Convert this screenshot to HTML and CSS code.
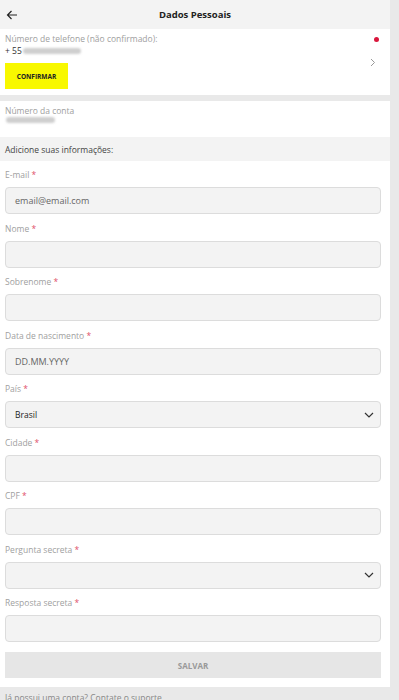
FILE: index.html
```html
<!DOCTYPE html>
<html lang="pt-BR">
<head>
    <meta charset="UTF-8">
    <meta name="viewport" content="width=device-width, initial-scale=1.0">
    <title>Dados Pessoais</title>
    <link rel="stylesheet" href="styles.css">
</head>
<body>
    <div class="page">
        <header class="topbar">
            <span class="back">
                <svg width="12" height="10" viewBox="0 0 12 10"><path d="M11 5H1.5M5.5 1 1.5 5l4 4" fill="none" stroke="#222" stroke-width="1.2"/></svg>
            </span>
            <h1>Dados Pessoais</h1>
        </header>

        <div class="card phone-card">
            <div class="phone-info">
                <p class="caption">Número de telefone (não confirmado):</p>
                <p class="value">+ 55<span class="blur blur-phone"></span></p>
                <button class="btn-confirm">CONFIRMAR</button>
            </div>
            <span class="dot"></span>
            <span class="chevron">
                <svg width="6" height="9" viewBox="0 0 6 9"><path d="M1 1l3.5 3.5L1 8" fill="none" stroke="#999" stroke-width="1"/></svg>
            </span>
        </div>

        <div class="card account-card">
            <p class="caption">Número da conta</p>
            <p class="value"><span class="blur blur-account"></span></p>
        </div>

        <div class="section-title">Adicione suas informações:</div>

        <form class="form">
            <div class="field">
                <label>E-mail <em>*</em></label>
                <div class="input">email@email.com</div>
            </div>
            <div class="field">
                <label>Nome <em>*</em></label>
                <div class="input"></div>
            </div>
            <div class="field">
                <label>Sobrenome <em>*</em></label>
                <div class="input"></div>
            </div>
            <div class="field">
                <label>Data de nascimento <em>*</em></label>
                <div class="input">DD.MM.YYYY</div>
            </div>
            <div class="field">
                <label>País <em>*</em></label>
                <div class="input select dark">Brasil
                    <svg width="10" height="6" viewBox="0 0 10 6"><path d="M1 1l4 4 4-4" fill="none" stroke="#333" stroke-width="1.2"/></svg>
                </div>
            </div>
            <div class="field">
                <label>Cidade <em>*</em></label>
                <div class="input"></div>
            </div>
            <div class="field">
                <label>CPF <em>*</em></label>
                <div class="input"></div>
            </div>
            <div class="field">
                <label>Pergunta secreta <em>*</em></label>
                <div class="input select">
                    <svg width="10" height="6" viewBox="0 0 10 6"><path d="M1 1l4 4 4-4" fill="none" stroke="#333" stroke-width="1.2"/></svg>
                </div>
            </div>
            <div class="field">
                <label>Resposta secreta <em>*</em></label>
                <div class="input"></div>
            </div>
            <div class="btn-save">SALVAR</div>
        </form>

        <p class="footer-note">Já possui uma conta? Contate o suporte</p>
    </div>
</body>
</html>
```

FILE: styles.css
```css
* {
    margin: 0;
    padding: 0;
    box-sizing: border-box;
}

body {
    font-family: 'Open Sans', 'Noto Sans', sans-serif;
    background: #e9e9e9;
    color: #333;
    font-size: 9px;
    overflow: hidden;
}

.page {
    width: 390px;
}

.topbar {
    height: 29px;
    background: #f3f3f3;
    display: flex;
    align-items: center;
    padding-left: 6px;
}

.topbar h1 {
    flex: 1;
    text-align: center;
    font-size: 9.5px;
    font-weight: 700;
    color: #222;
    padding-right: 18px;
}

.back {
    display: flex;
    width: 12px;
}

.card {
    background: #fff;
}

.caption {
    color: #a0a0a0;
    font-size: 8.5px;
    line-height: 12px;
}

.value {
    color: #333;
    font-size: 8.5px;
    line-height: 12px;
    display: flex;
    align-items: center;
}

.blur {
    display: inline-block;
    height: 6px;
    border-radius: 3px;
    background: #cfcfcf;
    filter: blur(1.2px);
}

.blur-phone {
    width: 58px;
    margin-left: 1px;
}

.blur-account {
    width: 49px;
    margin-left: 1px;
}

.phone-card {
    display: flex;
    padding: 4px 14px 6px 5px;
    height: 66px;
    position: relative;
}

.phone-info {
    flex: 1;
}

.btn-confirm {
    margin-top: 6px;
    width: 63px;
    height: 26px;
    border: none;
    background: #f8f800;
    font-family: inherit;
    font-size: 6.5px;
    font-weight: 700;
    color: #222;
}

.dot {
    position: absolute;
    top: 8px;
    right: 11px;
    width: 5px;
    height: 5px;
    border-radius: 50%;
    background: #d9163c;
}

.chevron {
    align-self: center;
    display: flex;
    margin-top: 2px;
}

.account-card {
    margin-top: 6px;
    height: 36px;
    padding: 4px 5px 0;
}

.section-title {
    height: 24px;
    background: #f3f3f3;
    padding-left: 5px;
    display: flex;
    align-items: center;
    font-size: 8.5px;
    color: #444;
}

.form {
    background: #fff;
    padding: 8px 9px 9px 5px;
}

.field {
    margin-bottom: 8.5px;
}

.field label {
    display: block;
    color: #a0a0a0;
    font-size: 8.5px;
    line-height: 12px;
    margin-bottom: 6px;
}

.field label em {
    font-style: normal;
    color: #e0506a;
}

.input {
    height: 27px;
    background: #f3f3f3;
    border: 1px solid #dcdcdc;
    border-radius: 4px;
    padding: 0 9px;
    display: flex;
    align-items: center;
    font-size: 9px;
    color: #666;
}

.select {
    justify-content: space-between;
    padding-right: 6px;
}

.select svg {
    margin-left: auto;
}

.dark {
    color: #222;
    font-size: 8.5px;
}

.btn-save {
    margin-top: 10px;
    height: 26px;
    background: #e6e6e6;
    display: flex;
    align-items: center;
    justify-content: center;
    font-size: 8px;
    font-weight: 700;
    color: #999;
}

.footer-note {
    padding: 5px 5px 0;
    font-size: 8.5px;
    color: #888;
    line-height: 12px;
}
```
